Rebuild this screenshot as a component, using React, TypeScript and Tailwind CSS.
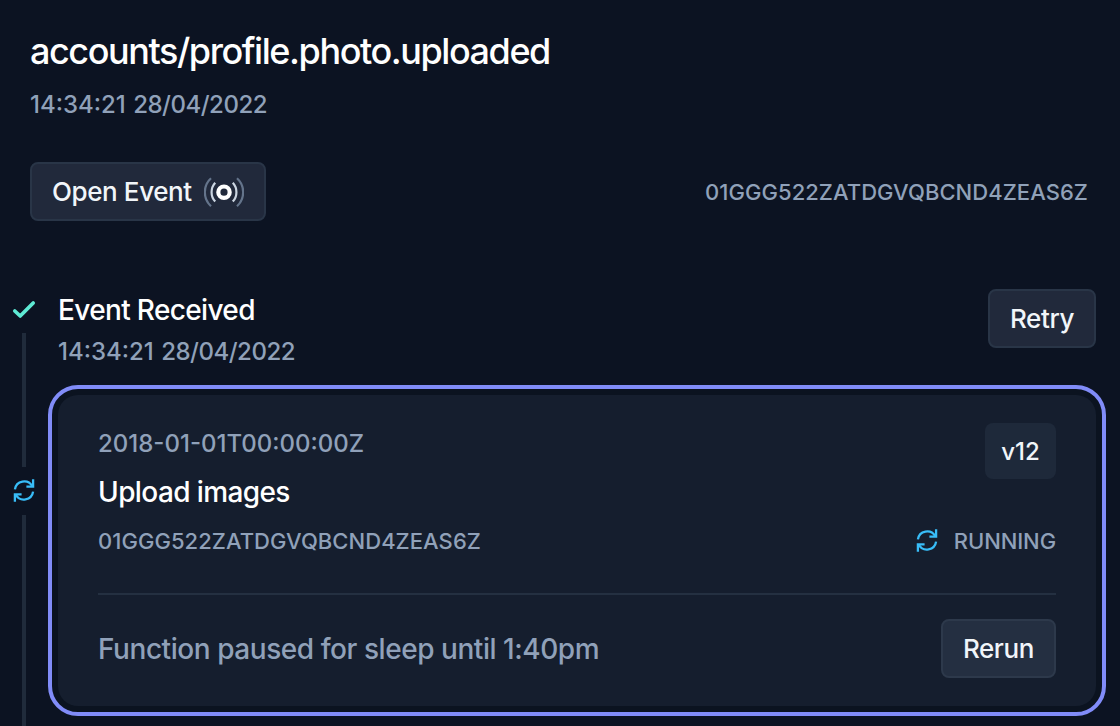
import type { ReactNode } from "react";

function RefreshIcon() {
  return (
    <svg
      className="h-6 w-6 shrink-0 text-[#38bdf8]"
      viewBox="0 0 24 24"
      fill="none"
      stroke="currentColor"
      strokeWidth="2.3"
    >
      <path d="M2.9 10.4A9.3 9.3 0 0 1 20.2 7.2" />
      <path d="M21.1 0.3V7.7H14.4" />
      <path d="M21.1 12.6A9.3 9.3 0 0 1 3.8 15.8" />
      <path d="M2.9 22.7V15.3H9.6" />
    </svg>
  );
}

function CheckIcon() {
  return (
    <svg
      className="h-6 w-6 shrink-0 text-[#5eead4]"
      viewBox="0 0 24 24"
      fill="none"
      stroke="currentColor"
      strokeWidth="3.7"
      strokeLinecap="round"
      strokeLinejoin="round"
    >
      <path d="M2.8 13L8.2 18L21.2 5" />
    </svg>
  );
}

function BroadcastIcon() {
  return (
    <svg className="h-8 w-10 shrink-0" viewBox="0 0 40 32" fill="none" strokeWidth="2.2">
      <circle cx="20" cy="16.2" r="5.7" stroke="#ffffff" strokeWidth="4.2" />
      <path d="M11.2 6.8A14 14 0 0 0 11.2 25.6" stroke="#cbd5e1" />
      <path d="M28.8 6.8A14 14 0 0 1 28.8 25.6" stroke="#cbd5e1" />
      <path d="M7 2.2A19 19 0 0 0 7 30.2" stroke="#64748b" />
      <path d="M33 2.2A19 19 0 0 1 33 30.2" stroke="#64748b" />
    </svg>
  );
}

function Button({ children, raised = false }: { children: ReactNode; raised?: boolean }) {
  return (
    <button
      className={
        "flex h-[59px] shrink-0 items-center gap-3 rounded-lg border-2 px-5 text-[26px] leading-8 tracking-[-0.4px] text-slate-100 " +
        (raised ? "border-[#2d394b] bg-[#242f41]" : "border-[#293547] bg-[#21293b]")
      }
    >
      {children}
    </button>
  );
}

function Timestamp() {
  return (
    <div className="text-2xl leading-8 text-slate-400 [word-spacing:1px]">
      14:34:21 <span className="tracking-[-0.5px]">28/04/2022</span>
    </div>
  );
}

function RunCard() {
  return (
    <div className="mt-[18px] -ml-2.5 h-[331px] w-[1058px] rounded-[30px] border-4 border-[#818cf8] bg-[#0b1320] p-1.5">
      <div className="flex h-full flex-col rounded-[20px] bg-[#151e2e] px-10 pt-7">
        <div className="flex h-[140px] items-start justify-between">
          <div className="pt-[5px]">
            <div className="text-2xl leading-8 text-slate-400">2018-01-01T00:00:00Z</div>
            <div className="mt-[14px] text-[28px] leading-9 tracking-[-0.6px] text-white">Upload images</div>
            <div className="mt-[15px] text-[22px] leading-8 tracking-[0.05px] text-slate-400">01GGG522ZATDGVQBCND4ZEAS6Z</div>
          </div>
          <div className="flex flex-col items-end">
            <div className="flex h-14 items-center rounded-lg bg-[#1e293a] px-4 pt-0.5 text-2xl tracking-[0.1px] text-slate-100">v12</div>
            <div className="mt-[46px] flex items-center gap-[15px] text-[22px] leading-8 tracking-[-0.1px] text-slate-400">
              <RefreshIcon />
              RUNNING
            </div>
          </div>
        </div>
        <div className="mt-[30px] flex items-center justify-between border-t-2 border-[#243041] pt-6">
          <div className="text-[28px] leading-9 tracking-[-0.45px] text-slate-400">Function paused for sleep until 1:40pm</div>
          <Button raised>Rerun</Button>
        </div>
      </div>
    </div>
  );
}

export default function App() {
  return (
    <div className="flex h-[726px] w-[1120px] flex-col overflow-hidden bg-[#0c1322] font-['Inter',sans-serif] font-[450]">
      <header className="px-[30px] pt-[31px]">
        <h1 className="mb-[18px] text-4xl leading-10 tracking-[-1.43px] text-white">accounts/profile.photo.uploaded</h1>
        <Timestamp />
        <div className="mt-[41px] flex items-center justify-between">
          <Button>
            Open Event
            <BroadcastIcon />
          </Button>
          <div className="pr-0.5 text-[22px] leading-8 tracking-[0.05px] text-slate-400">01GGG522ZATDGVQBCND4ZEAS6Z</div>
        </div>
      </header>
      <main className="mt-[68px] flex min-h-0 flex-1 pl-3">
        <div className="flex w-6 shrink-0 flex-col items-center pt-[9px]">
          <CheckIcon />
          <div className="mt-[11px] h-[134px] w-1 shrink-0 bg-[#202b3b]" />
          <div className="mt-3">
            <RefreshIcon />
          </div>
          <div className="mt-3 w-1 flex-1 bg-[#202b3b]" />
        </div>
        <div className="ml-[22px] w-[1038px] shrink-0">
          <div className="flex h-[78px] items-start justify-between">
            <div className="pt-[3px]">
              <div className="mb-2 text-[28px] leading-9 tracking-[-0.65px] text-white">Event Received</div>
              <Timestamp />
            </div>
            <Button>Retry</Button>
          </div>
          <RunCard />
        </div>
      </main>
    </div>
  );
}
